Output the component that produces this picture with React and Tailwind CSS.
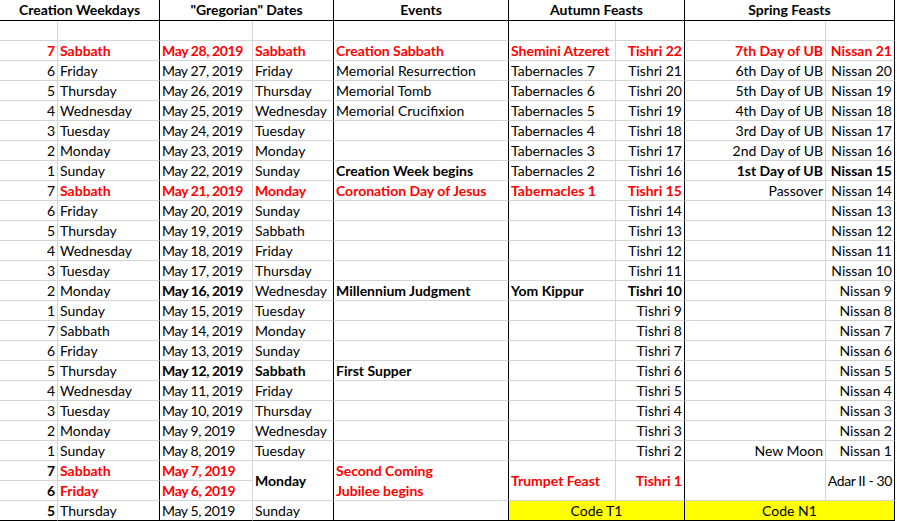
import React from "react";
import clsx from "clsx";

// right border colour of each of the 9 sheet columns
const RIGHT = [
  "border-r-[#d4d4d4]",
  "border-r-black",
  "border-r-[#d4d4d4]",
  "border-r-black",
  "border-r-black",
  "border-r-[#d4d4d4]",
  "border-r-black",
  "border-r-[#d4d4d4]",
  "border-r-black",
];
const ALIGN = [
  "justify-end",
  "justify-start",
  "justify-start tracking-[-0.4px]",
  "justify-start",
  "justify-start",
  "justify-start",
  "justify-end",
  "justify-end",
  "justify-end",
];

// "!" = red bold, "*" = bold
const ROWS = [
  ["!7", "!Sabbath", "!May 28, 2019", "!Sabbath", "!Creation Sabbath", "!Shemini Atzeret", "!Tishri 22", "!7th Day of UB", "!Nissan 21"],
  ["6", "Friday", "May 27, 2019", "Friday", "Memorial Resurrection", "Tabernacles 7", "Tishri 21", "6th Day of UB", "Nissan 20"],
  ["5", "Thursday", "May 26, 2019", "Thursday", "Memorial Tomb", "Tabernacles 6", "Tishri 20", "5th Day of UB", "Nissan 19"],
  ["4", "Wednesday", "May 25, 2019", "Wednesday", "Memorial Crucifixion", "Tabernacles 5", "Tishri 19", "4th Day of UB", "Nissan 18"],
  ["3", "Tuesday", "May 24, 2019", "Tuesday", "", "Tabernacles 4", "Tishri 18", "3rd Day of UB", "Nissan 17"],
  ["2", "Monday", "May 23, 2019", "Monday", "", "Tabernacles 3", "Tishri 17", "2nd Day of UB", "Nissan 16"],
  ["1", "Sunday", "May 22, 2019", "Sunday", "*Creation Week begins", "Tabernacles 2", "Tishri 16", "*1st Day of UB", "*Nissan 15"],
  ["7", "!Sabbath", "!May 21, 2019", "!Monday", "!Coronation Day of Jesus", "!Tabernacles 1", "!Tishri 15", "Passover", "Nissan 14"],
  ["6", "Friday", "May 20, 2019", "Sunday", "", "", "Tishri 14", "", "Nissan 13"],
  ["5", "Thursday", "May 19, 2019", "Sabbath", "", "", "Tishri 13", "", "Nissan 12"],
  ["4", "Wednesday", "May 18, 2019", "Friday", "", "", "Tishri 12", "", "Nissan 11"],
  ["3", "Tuesday", "May 17, 2019", "Thursday", "", "", "Tishri 11", "", "Nissan 10"],
  ["2", "Monday", "*May 16, 2019", "Wednesday", "*Millennium Judgment", "*Yom Kippur", "*Tishri 10", "", "Nissan 9"],
  ["1", "Sunday", "May 15, 2019", "Tuesday", "", "", "Tishri 9", "", "Nissan 8"],
  ["7", "Sabbath", "May 14, 2019", "Monday", "", "", "Tishri 8", "", "Nissan 7"],
  ["6", "Friday", "May 13, 2019", "Sunday", "", "", "Tishri 7", "", "Nissan 6"],
  ["5", "Thursday", "*May 12, 2019", "*Sabbath", "*First Supper", "", "Tishri 6", "", "Nissan 5"],
  ["4", "Wednesday", "May 11, 2019", "Friday", "", "", "Tishri 5", "", "Nissan 4"],
  ["3", "Tuesday", "May 10, 2019", "Thursday", "", "", "Tishri 4", "", "Nissan 3"],
  ["2", "Monday", "May 9, 2019", "Wednesday", "", "", "Tishri 3", "", "Nissan 2"],
  ["1", "Sunday", "May 8, 2019", "Tuesday", "", "", "Tishri 2", "New Moon", "Nissan 1"],
];

function tone(raw) {
  if (raw.startsWith("!")) return { text: raw.slice(1), cls: "font-bold text-[#ff0000]" };
  if (raw.startsWith("*")) return { text: raw.slice(1), cls: "font-bold" };
  return { text: raw, cls: "" };
}

function Cell({ col, raw = "", span = 1, tall, last, center, yellow, extra, children }) {
  const { text, cls } = tone(raw);
  return (
    <div
      className={clsx(
        "flex items-center overflow-hidden whitespace-nowrap border-r border-b px-[2px]",
        RIGHT[col + span - 1],
        last ? "border-b-black" : "border-b-[#d4d4d4]",
        center ? "justify-center" : ALIGN[col],
        span === 2 && "col-span-2",
        tall && "row-span-2",
        yellow && "bg-[#ffff00]",
        cls,
        extra
      )}
    >
      {children ?? text}
    </div>
  );
}

function Head({ col, span, children }) {
  return (
    <div
      className={clsx(
        "flex items-center justify-center border-r border-b border-b-black font-bold whitespace-nowrap",
        RIGHT[col + span - 1],
        span === 2 && "col-span-2"
      )}
    >
      {children}
    </div>
  );
}

export default function App() {
  return (
    <div className="bg-white w-[897px] h-[521px] overflow-hidden">
      <div
        className="grid w-[895px] grid-cols-[58px_102px_93px_81px_175px_107px_69px_141px_69px] grid-rows-[21px_repeat(25,20px)] text-[14px] leading-[20px] text-black"
        style={{ fontFamily: "Lato, 'Liberation Sans', sans-serif" }}
      >
        <Head col={0} span={2}>Creation Weekdays</Head>
        <Head col={2} span={2}>"Gregorian" Dates</Head>
        <Head col={4} span={1}>Events</Head>
        <Head col={5} span={2}>Autumn Feasts</Head>
        <Head col={7} span={2}>Spring Feasts</Head>

        {/* empty spacer row */}
        {RIGHT.map((_, i) => (
          <Cell key={"blank" + i} col={i} />
        ))}

        {ROWS.map((row, r) =>
          row.map((raw, i) => <Cell key={r + "-" + i} col={i} raw={raw} />)
        )}

        {/* May 7 / May 6 merged block */}
        <Cell col={0} raw="*7" />
        <Cell col={1} raw="!Sabbath" />
        <Cell col={2} raw="!May 7, 2019" />
        <Cell col={3} raw="*Monday" tall />
        <Cell col={4} tall>
          <div className="flex flex-col font-bold text-[#ff0000]">
            <span>Second Coming</span>
            <span>Jubilee begins</span>
          </div>
        </Cell>
        <Cell col={5} raw="!Trumpet Feast" tall />
        <Cell col={6} raw="!Tishri 1" tall />
        <Cell col={7} tall />
        <Cell col={8} raw="Adar II - 30" tall extra="px-[1px] tracking-[-0.4px]" />
        <Cell col={0} raw="*6" />
        <Cell col={1} raw="!Friday" />
        <Cell col={2} raw="!May 6, 2019" />

        {/* last row */}
        <Cell col={0} raw="*5" last />
        <Cell col={1} raw="Thursday" last />
        <Cell col={2} raw="May 5, 2019" last />
        <Cell col={3} raw="Sunday" last />
        <Cell col={4} last />
        <Cell col={5} span={2} raw="Code T1" center yellow last />
        <Cell col={7} span={2} raw="Code N1" center yellow last />
      </div>
    </div>
  );
}
